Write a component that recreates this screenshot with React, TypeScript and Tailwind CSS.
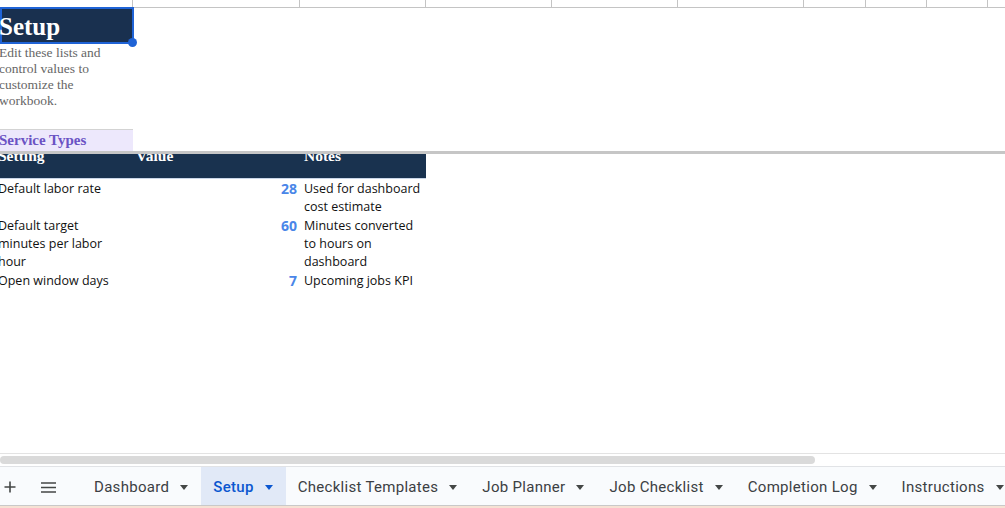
import type { ReactNode } from 'react'

// Spreadsheet "Setup" sheet view — frozen header rows, settings table, sheet tabs at the bottom.

const serif = { fontFamily: '"Liberation Serif", "DejaVu Serif", serif' }
const sans = { fontFamily: '"Open Sans", "Noto Sans", sans-serif' }
const roboto = { fontFamily: 'Roboto, "Liberation Sans", sans-serif' }

const topCols = [133, 167, 126, 126, 126, 126, 62, 61, 61, 61]

const settings = [
  { name: ['Default labor rate'], value: 28, notes: ['Used for dashboard', 'cost estimate'] },
  { name: ['Default target', 'minutes per labor', 'hour'], value: 60, notes: ['Minutes converted', 'to hours on', 'dashboard'] },
  { name: ['Open window days'], value: 7, notes: ['Upcoming jobs KPI'] },
]

const tabs = ['Dashboard', 'Setup', 'Checklist Templates', 'Job Planner', 'Job Checklist', 'Completion Log', 'Instructions']

function Caret({ active }: { active?: boolean }) {
  return (
    <svg className="w-[8px] h-[5px] flex-shrink-0" viewBox="0 0 8 5" aria-hidden="true">
      <path d="M0 0h8L4 5z" fill={active ? '#0b57d0' : '#444746'} />
    </svg>
  )
}

function Lines({ lines }: { lines: string[] }): ReactNode {
  return lines.map((l) => (
    <div key={l} className="h-[18px] leading-[18px] whitespace-nowrap">
      {l}
    </div>
  ))
}

export default function App() {
  return (
    <div className="w-[1005px] h-[508px] bg-white flex flex-col overflow-hidden relative">
      {/* top grid row */}
      <div className="flex h-[8px] flex-shrink-0">
        {topCols.map((w, i) => (
          <div
            key={i}
            style={{ width: w }}
            className={`h-full border-r border-[#c4c4c4] flex-shrink-0 ${i === 0 ? '' : 'border-b'}`}
          />
        ))}
      </div>

      {/* title cell */}
      <div className="relative w-[134px] h-[37px] -mt-px bg-[#19304f] border-2 border-[#1f63d6] flex items-center flex-shrink-0">
        <span className="text-white font-bold text-[25px] leading-none -ml-[3px] mt-[2px]" style={serif}>
          Setup
        </span>
        <span className="absolute -right-[5px] -bottom-[5px] w-[9px] h-[9px] rounded-full bg-[#1f63d6]" />
      </div>

      {/* description */}
      <div className="w-[133px] pt-[1px] text-[13.5px] leading-[16px] text-[#666666] -ml-[1px]" style={serif}>
        <div>Edit these lists and</div>
        <div>control values to</div>
        <div>customize the</div>
        <div>workbook.</div>
      </div>

      {/* section title */}
      <div className="mt-[20px] w-[133px] h-[22px] bg-[#ede8fc] border-t border-[#d3d3d3] flex items-center">
        <span className="text-[15px] font-bold text-[#6b53c4] -ml-[1px]" style={serif}>
          Service Types
        </span>
      </div>

      {/* frozen pane divider */}
      <div className="h-[3px] bg-[#c6c6c6] flex-shrink-0" />

      {/* table header */}
      <div className="w-[426px] h-[25px] bg-[#19324f] flex overflow-hidden text-white font-bold text-[15.5px] border-b border-[#c9d6e8] flex-shrink-0" style={serif}>
        <div className="w-[133px] -mt-[8px] -ml-[2px] leading-[20px]">Setting</div>
        <div className="w-[169px] -mt-[8px] pl-[5px] leading-[20px]">Value</div>
        <div className="w-[126px] -mt-[8px] pl-[4px] leading-[20px]">Notes</div>
      </div>

      {/* rows */}
      <div className="pt-px text-[12.5px] text-[#111111]" style={sans}>
        {settings.map((s) => (
          <div key={s.value} className="flex w-[426px] pb-px">
            <div className="w-[133px] -ml-[2px]">
              <Lines lines={s.name} />
            </div>
            <div className="w-[169px] pr-[3px] text-right font-bold text-[14px] text-[#4a86e8] leading-[18px]">
              {s.value}
            </div>
            <div className="w-[126px] pl-[4px]">
              <Lines lines={s.notes} />
            </div>
          </div>
        ))}
      </div>

      <div className="flex-1" />

      {/* horizontal scrollbar */}
      <div className="h-[13px] border-t border-[#e3e3e3] flex items-center flex-shrink-0">
        <div className="w-[815px] h-[8px] rounded-full bg-[#dadada]" />
      </div>

      {/* sheet tabs */}
      <div className="h-[39px] bg-[#f9fbfd] border-t border-[#e1e3e6] flex items-stretch overflow-hidden text-[15px] tracking-[0.3px] text-[#3c4043] flex-shrink-0" style={roboto}>
        <div className="w-[41px] flex-shrink-0 flex items-center pl-[4px] pt-[2px]">
          <svg className="w-[12px] h-[12px]" viewBox="0 0 12 12" aria-hidden="true">
            <path d="M6 0.5v11M0.5 6h11" stroke="#444746" strokeWidth="1.6" />
          </svg>
        </div>
        <div className="w-[41px] flex-shrink-0 flex items-center pt-[2px]">
          <svg className="w-[15px] h-[11px]" viewBox="0 0 15 11" aria-hidden="true">
            <path d="M0 1h15M0 5.5h15M0 10h15" stroke="#444746" strokeWidth="1.5" />
          </svg>
        </div>
        {tabs.map((t) => {
          const active = t === 'Setup'
          return (
            <div
              key={t}
              className={`flex flex-shrink-0 items-center gap-[11px] pl-[12px] pr-[13px] pt-[2px] ${active ? 'bg-[#e1e9f7] text-[#0b57d0] font-medium' : ''}`}
            >
              <span className="whitespace-nowrap">{t}</span>
              <Caret active={active} />
            </div>
          )
        })}
      </div>
      <div className="h-[3px] bg-[#f6e2d4] border-t border-[#c9c9c9] flex-shrink-0" />
    </div>
  )
}
